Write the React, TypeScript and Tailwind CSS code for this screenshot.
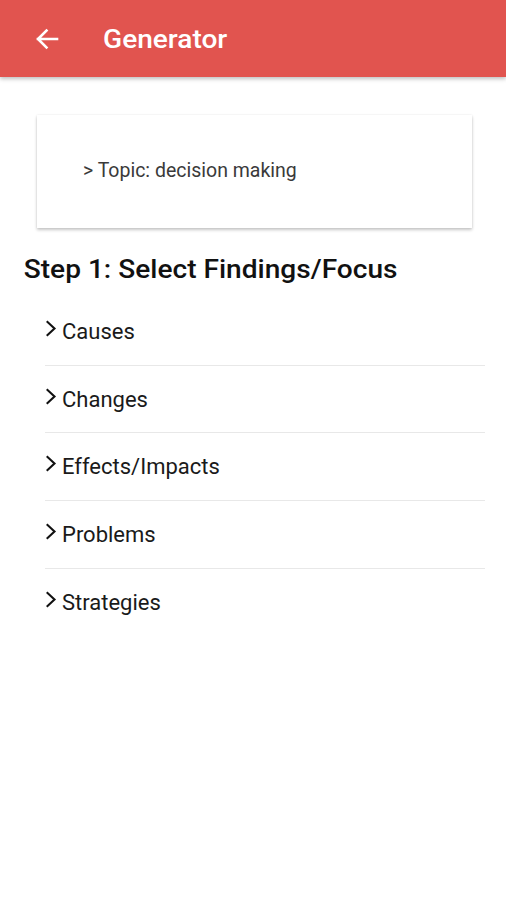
import React from "react";

const items = ["Causes", "Changes", "Effects/Impacts", "Problems", "Strategies"];

function Chevron() {
  return (
    <svg width="12" height="18" viewBox="0 0 12 18" className="shrink-0">
      <path d="M2.5 2 L9.5 8.5 L2.5 15" fill="none" stroke="#111" strokeWidth="2.1" strokeLinecap="square" />
    </svg>
  );
}

export default function App() {
  return (
    <div className="w-[506px] h-[900px] bg-white overflow-hidden" style={{ fontFamily: "Roboto, 'Liberation Sans', sans-serif" }}>
      <div className="h-[77px] bg-[#e1544f] flex items-center shadow-[0_2px_4px_rgba(0,0,0,0.25)] relative z-10">
        <div className="w-[103px] pl-[34px] flex items-center">
          <svg width="26" height="26" viewBox="0 0 26 26">
            <path d="M23 13 H4 M12.5 4.5 L4 13 L12.5 21.5" fill="none" stroke="#fff" strokeWidth="2.6" strokeLinecap="square" />
          </svg>
        </div>
        <div className="text-white text-[26px] font-medium leading-none scale-x-[1.08] origin-left">Generator</div>
      </div>
      <div className="pt-[38px] pl-[37px] pr-[34px]">
        <div className="h-[113px] bg-white shadow-[0_2px_3px_rgba(0,0,0,0.22),0_0_2px_rgba(0,0,0,0.08)] flex items-center pl-[46px]">
          <span className="text-[19.5px] text-[#3a3a3a] mt-[-2px]">&gt; Topic: decision making</span>
        </div>
      </div>
      <div className="pl-[22px] mt-[28px] text-[26px] font-medium text-[#111] leading-none scale-x-[1.08] origin-left">Step 1: Select Findings/Focus</div>
      <div className="pl-[45px] pr-[21px] mt-[16px]">
        {items.map((it, i) => (
          <div key={it} className={`h-[67.7px] flex items-center ${i < items.length - 1 ? "border-b border-[#e8e8e8]" : ""}`}>
            <div className="flex items-center gap-[5px]">
              <div className="mt-[-5px]"><Chevron /></div>
              <span className="text-[22px] text-[#1a1a1a]">{it}</span>
            </div>
          </div>
        ))}
      </div>
    </div>
  );
}
